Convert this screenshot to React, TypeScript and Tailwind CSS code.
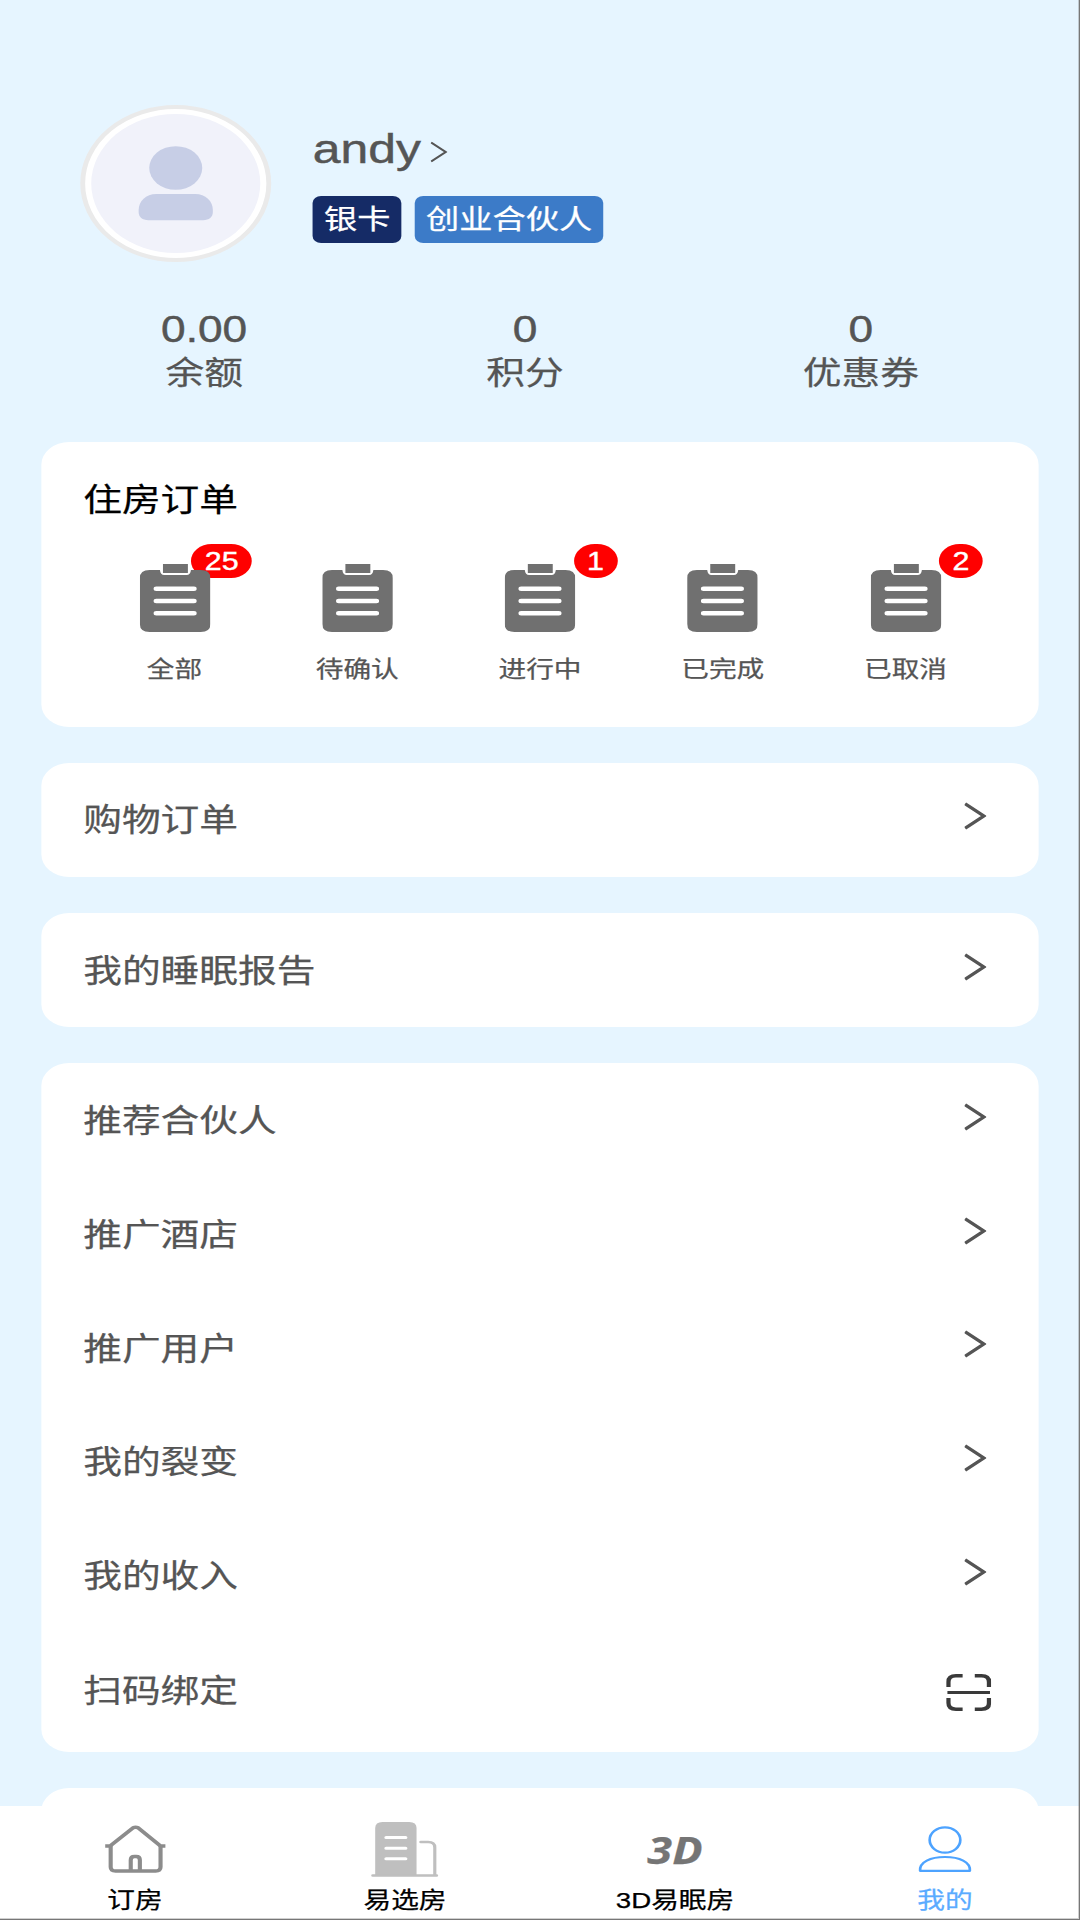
import clsx from "clsx"

const orders = [
  { label: "全部", count: 25 },
  { label: "待确认", count: 0 },
  { label: "进行中", count: 1 },
  { label: "已完成", count: 0 },
  { label: "已取消", count: 2 },
]

const stats = [
  { value: "0.00", label: "余额" },
  { value: "0", label: "积分" },
  { value: "0", label: "优惠券" },
]

const menu = ["推荐合伙人", "推广酒店", "推广用户", "我的裂变", "我的收入"]

const Avatar = () => (
  <div className="w-[157px] h-[157px] rounded-full border-[4.500px] border-[#eaeaea] bg-white p-[5px] shrink-0">
    <svg viewBox="0 0 139 139" className="w-full h-full rounded-full bg-[#f1f2fa]">
      <circle cx="69.500" cy="54" r="21.800" fill="#c7cee6" />
      <path d="M39 96c0-9 6-16 14.500-16h32c8.500 0 14.500 7 14.500 16v2c0 5-3 8.200-8 8.200h-45c-5 0-8-3.200-8-8.200z" fill="#c7cee6" />
    </svg>
  </div>
)

const OrderIcon = () => (
  <svg viewBox="0 0 58 68" className="relative w-[58px] h-[68px]">
    <path d="M8 6h8.500c.3 3.300 1.500 5 3.500 5h18.500c2 0 3.200-1.700 3.500-5H50q8 0 8 8v46q0 8-8 8H8q-8 0-8-8V14q0-8 8-8z" fill="#707070" />
    <path d="M19 0h20.500v9H19z" fill="#707070" />
    <path d="M13.500 24.700h31M13.500 37h31M13.500 49.300h31" stroke="#fff" strokeWidth="4.400" strokeLinecap="round" />
  </svg>
)

const Arrow = () => (
  <svg viewBox="0 0 18 28" className="w-[18px] h-[28px] relative -top-[3.500px]">
    <path d="M.5 1.800L16 14L.5 26.200" fill="none" stroke="#555" strokeWidth="3" />
  </svg>
)

const ScanIcon = () => (
  <svg viewBox="0 0 37 37" className="w-[37px] h-[37px]" fill="none" stroke="#3a3a3a" strokeWidth="3.600">
    <path d="M1.800 13V8q0-6.200 6.200-6.200h5.500M23.500 1.800H29q6.200 0 6.200 6.200v5M35.200 24v5q0 6.200-6.200 6.200h-5.500M13.500 35.200H8q-6.200 0-6.200-6.200v-5" />
    <path d="M1 18.500h35" strokeWidth="3" />
  </svg>
)

const HomeIcon = () => (
  <svg viewBox="0 0 52 48" className="w-[52px] h-[48px]" fill="none" stroke="#8c8c8c" strokeWidth="3.400" strokeLinejoin="round">
    <path d="M1.500 21h4L24.500 2.800q2-1.300 4 0l18.500 18.200h4" />
    <path d="M6 20v22q0 4 4 4h33q4 0 4-4V20" />
    <path d="M22.500 46V35q0-3.500 3-3.500h1.500q3 0 3 3.500v11" />
  </svg>
)

const BuildingIcon = () => (
  <svg viewBox="0 0 56 55" className="w-[56px] h-[55px]" fill="none">
    <path d="M3.500 54V6q0-6 6-6h22q6 0 6 6v48z" fill="#bfbfbf" />
    <path d="M1.500 53.500h52.500M41 20h6q5.500 0 5.500 5.500V53" stroke="#bfbfbf" strokeWidth="2.600" strokeLinecap="round" />
    <path d="M12.500 15.500h16M12.500 26.300h16M12.500 36.700h16" stroke="#fff" strokeWidth="3" strokeLinecap="round" />
  </svg>
)

const UserIcon = () => (
  <svg viewBox="0 0 44 46" className="w-[44px] h-[46px]" fill="none" stroke="#4da3ff" strokeWidth="2.200">
    <circle cx="22" cy="14" r="12.600" />
    <path d="M1.500 44.800C1 36 10 31 22 31s21 5 20.500 13.800z" strokeLinejoin="round" />
  </svg>
)

const tabs = [
  { label: "订房", icon: <HomeIcon /> },
  { label: "易选房", icon: <BuildingIcon /> },
  { label: "3D易眠房", icon: <span className="font-['Noto_Sans'] font-bold italic text-[37px] leading-none text-[#757575]">3D</span> },
  { label: "我的", icon: <UserIcon />, active: true },
]

const Row = ({ title }: { title: string }) => (
  <div className="h-[113.850px] pl-[34.200px] pr-[43px] flex justify-between items-center">
    <span className="pt-[3px]">{title}</span>
    <Arrow />
  </div>
)

const App = () => {
  return (
    <div className="relative w-[1080px] h-[1920px] overflow-hidden bg-[#e6f5ff]">
      {/* the page is designed 888 wide and stretched to fill the window */}
      <div className="w-[888px] h-[1920px] origin-top-left scale-x-[1.2162] flex flex-col font-['Liberation_Sans','Noto_Sans_CJK_SC',sans-serif] text-[31.850px] leading-none text-[#555] [-webkit-text-stroke:0.25px]">
        <div className="flex-1 min-h-0 overflow-hidden px-[34.200px]">
          <div className="flex pt-[105px] pl-[32px]">
            <Avatar />
            <div className="ml-[34px] pt-[20px]">
              <div className="flex items-center h-[48px]">
                <span className="text-[41px] [-webkit-text-stroke:0.45px]">andy</span>
                <svg viewBox="0 0 14 22" className="w-[14px] h-[22px] ml-[8px] mt-[6px]">
                  <path d="M.5 1.500L12.500 11L.5 20.500" fill="none" stroke="#555" strokeWidth="1.900" />
                </svg>
              </div>
              <div className="flex gap-[11px] mt-[22.500px] text-[27.300px] text-white">
                <span className="h-[47px] px-[9.200px] pt-[2px] flex items-center rounded-[7px] bg-[#152b66]">银卡</span>
                <span className="h-[47px] px-[9.200px] pt-[2px] flex items-center rounded-[7px] bg-[#3c7bc8]">创业合伙人</span>
              </div>
            </div>
          </div>

          <div className="flex justify-around pt-[46px] h-[180px]">
            {stats.map((item) => (
              <div key={item.label} className="flex flex-col items-center">
                <span className="text-[36.400px] leading-[44px] [-webkit-text-stroke:0.45px]">{item.value}</span>
                <span className="leading-[43px]">{item.label}</span>
              </div>
            ))}
          </div>

          <div className="h-[284.500px] rounded-[22.750px] bg-white px-[34.200px] pt-[35.500px]">
            <h2 className="text-black leading-[44px]">住房订单</h2>
            <div className="flex mt-[42.500px]">
              {orders.map((item) => (
                <div key={item.label} className="relative flex-1 flex flex-col items-center">
                  {item.count > 0 && (
                    <span className="absolute right-[11.400px] -top-[20px] h-[34px] px-[11.100px] pt-[1px] flex items-center rounded-full bg-[#f00] text-white text-[25px] [-webkit-text-stroke:0.4px]">{item.count}</span>
                  )}
                  <OrderIcon />
                  <span className="mt-[20px] text-[22.750px] leading-[34px]">{item.label}</span>
                </div>
              ))}
            </div>
          </div>

          <div className="mt-[36.400px] rounded-[22.750px] bg-white">
            <Row title="购物订单" />
          </div>
          <div className="mt-[36.400px] rounded-[22.750px] bg-white">
            <Row title="我的睡眠报告" />
          </div>
          <div className="mt-[36.400px] rounded-[22.750px] bg-white">
            {menu.map((title) => <Row key={title} title={title} />)}
            <div className="h-[119px] pl-[34.200px] pr-[38.500px] flex justify-between items-center">
              <span className="-mt-[1px]">扫码绑定</span>
              <ScanIcon />
            </div>
          </div>
          <div className="mt-[36.400px] h-[114px] rounded-t-[22.750px] bg-white"></div>
        </div>

        <div className="h-[114px] shrink-0 bg-white flex text-black">
          {tabs.map((tab) => (
            <div key={tab.label} className={clsx("flex-1 flex flex-col items-center pt-[11px]", tab.active && "text-[#5aabff]")}>
              <div className="h-[64px] flex items-center">{tab.icon}</div>
              <span className="text-[22.750px] leading-[38px]">{tab.label}</span>
            </div>
          ))}
        </div>
      </div>
      <div className="absolute inset-0 border-r border-b border-[#777]">
        <div className="h-full border-r border-b border-[#777]/35"></div>
      </div>
    </div>
  )
}

export default App
